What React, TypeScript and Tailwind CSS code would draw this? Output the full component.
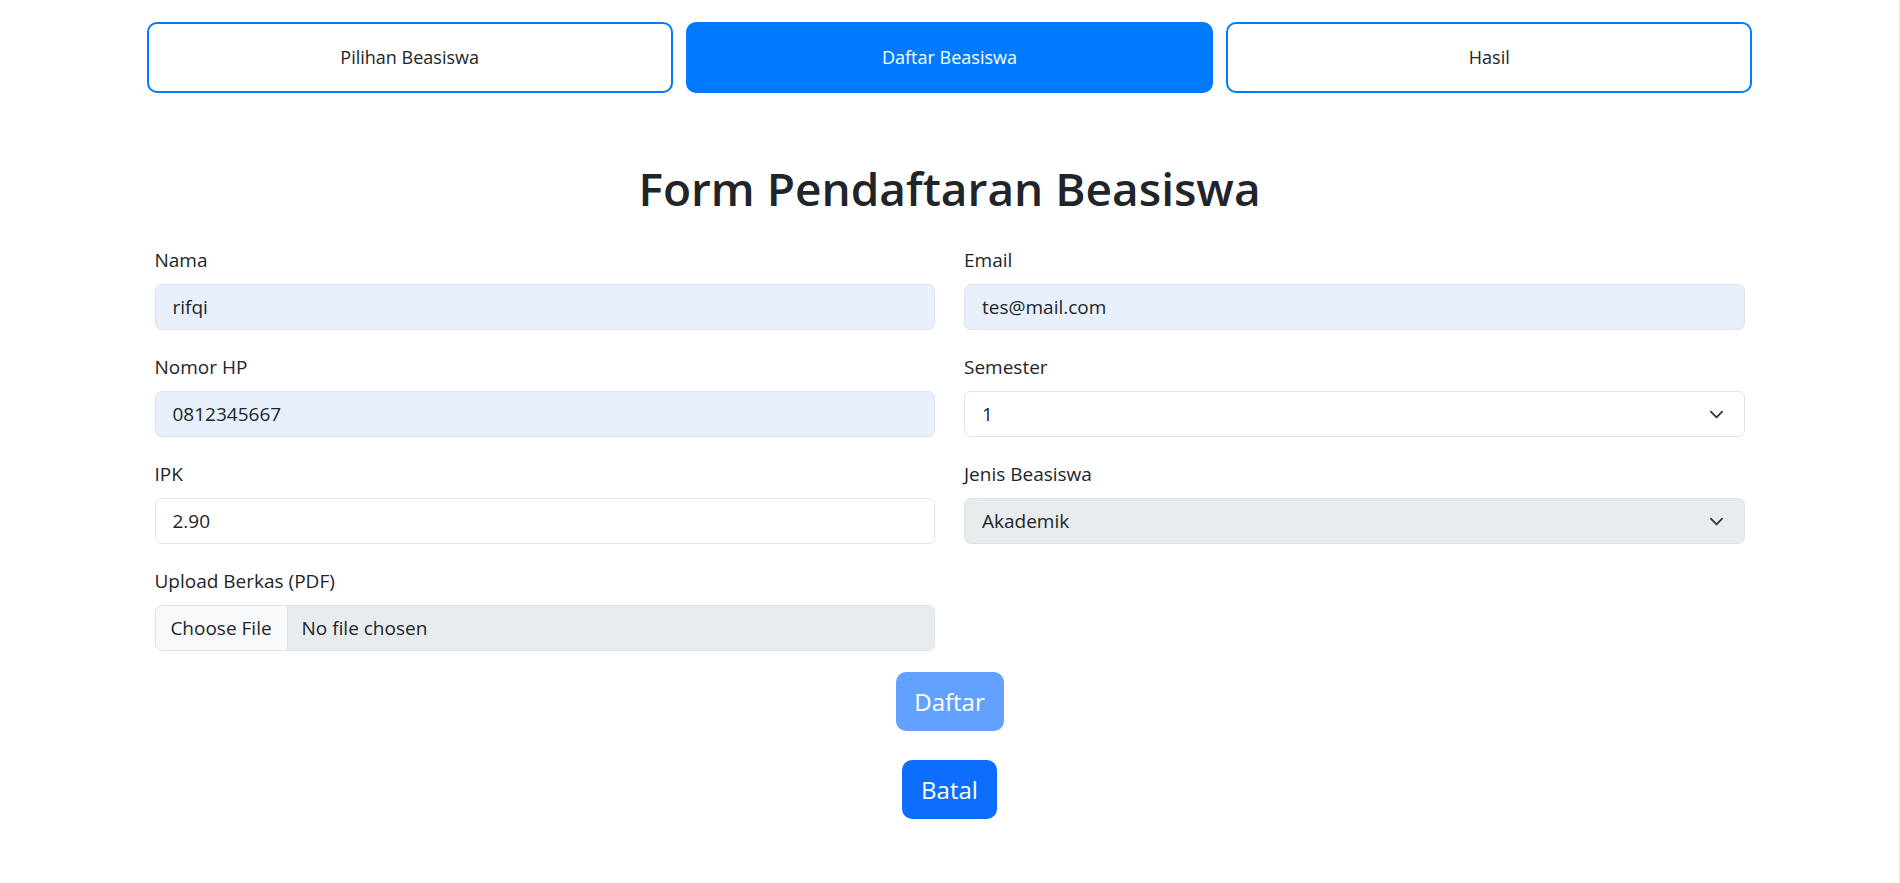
import React from 'react';

const tabs = [
  { label: 'Pilihan Beasiswa', active: false },
  { label: 'Daftar Beasiswa', active: true },
  { label: 'Hasil', active: false },
];

function Chevron() {
  return (
    <svg viewBox="0 0 16 16" className="w-[15px] h-[15px]" fill="none">
      <path d="m2 5 6 6 6-6" stroke="#343a40" strokeWidth="2" strokeLinecap="round" strokeLinejoin="round" />
    </svg>
  );
}

function Field({ label, children }: { label: string; children: React.ReactNode }) {
  return (
    <div>
      <label className="block text-[19px] leading-[28.5px] mb-[9.5px]">{label}</label>
      {children}
    </div>
  );
}

function TextInput({ value, filled }: { value: string; filled?: boolean }) {
  return (
    <input
      readOnly
      value={value}
      className={`w-full h-[46px] px-[17px] rounded-[7px] border border-[#dee2e6] text-[19px] text-[#212529] outline-none ${
        filled ? 'bg-[#e8f0fe]' : 'bg-white'
      }`}
    />
  );
}

function SelectBox({ value, disabled }: { value: string; disabled?: boolean }) {
  return (
    <div
      className={`w-full h-[46px] pl-[17px] pr-[20px] rounded-[7px] border border-[#dee2e6] text-[19px] flex items-center justify-between ${
        disabled ? 'bg-[#e9ecef]' : 'bg-white'
      }`}
    >
      <span>{value}</span>
      <Chevron />
    </div>
  );
}

export default function App() {
  return (
    <div
      className="min-h-screen bg-white text-[#212529] border-r border-[#ececec]"
      style={{ fontFamily: '"Open Sans", "Noto Sans", sans-serif' }}
    >
      <div className="w-[1606px] mx-auto pt-[22px] flex gap-[13.5px]">
        {tabs.map((t) => (
          <button
            key={t.label}
            className={`flex-1 h-[71px] rounded-[10px] border-2 border-[#007bff] text-[18px] ${
              t.active ? 'bg-[#007bff] text-white' : 'bg-white text-[#212529]'
            }`}
          >
            {t.label}
          </button>
        ))}
      </div>

      <h1 className="text-center text-[46px] leading-[57px] font-semibold mt-[67px] mb-[29px]">
        Form Pendaftaran Beasiswa
      </h1>

      <form className="w-[1590px] mx-auto">
        <div className="grid grid-cols-2 gap-x-[29px] gap-y-[23px]">
          <Field label="Nama">
            <TextInput value="rifqi" filled />
          </Field>
          <Field label="Email">
            <TextInput value="tes@mail.com" filled />
          </Field>
          <Field label="Nomor HP">
            <TextInput value="0812345667" filled />
          </Field>
          <Field label="Semester">
            <SelectBox value="1" />
          </Field>
          <Field label="IPK">
            <TextInput value="2.90" />
          </Field>
          <Field label="Jenis Beasiswa">
            <SelectBox value="Akademik" disabled />
          </Field>
          <Field label="Upload Berkas (PDF)">
            <div className="w-full h-[46px] rounded-[7px] border border-[#dee2e6] bg-[#e9ecef] flex items-center text-[19px] overflow-hidden">
              <span className="h-full w-[132px] flex items-center justify-center bg-[#f8f9fa] border-r border-[#dee2e6]">
                Choose File
              </span>
              <span className="pl-[14px]">No file chosen</span>
            </div>
          </Field>
        </div>

        <div className="flex flex-col items-center mt-[21px] gap-[29px]">
          <button
            type="button"
            disabled
            className="w-[108px] h-[59px] rounded-[10px] bg-[#62a1fe] text-white text-[24px]"
          >
            Daftar
          </button>
          <button
            type="button"
            className="w-[95px] h-[59px] rounded-[10px] bg-[#0d6efd] text-white text-[24px]"
          >
            Batal
          </button>
        </div>
      </form>
    </div>
  );
}
